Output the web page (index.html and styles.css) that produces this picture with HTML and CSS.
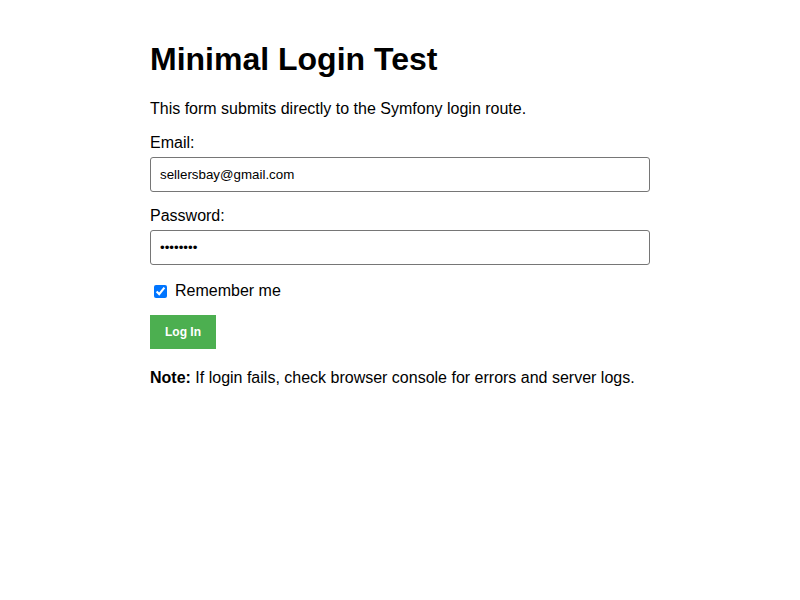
FILE: index.html
```html
<!DOCTYPE html>
<html>
<head>
<meta charset="utf-8">
<title>Minimal Login Test</title>
<link rel="stylesheet" href="styles.css">
</head>
<body>
<div class="container">
  <h1 class="title">Minimal Login Test</h1>
  <p class="intro">This form submits directly to the Symfony login route.</p>
  <form class="login-form">
    <div class="form-group">
      <label class="label" for="email">Email:</label>
      <input class="input" type="email" id="email" value="sellersbay@gmail.com">
    </div>
    <div class="form-group">
      <label class="label" for="password">Password:</label>
      <input class="input" type="password" id="password" value="password">
    </div>
    <div class="form-group check-row">
      <input class="checkbox" type="checkbox" id="remember" checked>
      <label class="check-label" for="remember">Remember me</label>
    </div>
    <button class="btn" type="button">Log In</button>
  </form>
  <p class="note"><strong>Note:</strong> If login fails, check browser console for errors and server logs.</p>
</div>
</body>
</html>
```
FILE: styles.css
```css
html, body {
  margin: 0;
  padding: 0;
  background: #fff;
}
body {
  font-family: "Liberation Sans", Arial, sans-serif;
  font-size: 16px;
  color: #000;
}
.container {
  max-width: 500px;
  margin: 0 auto;
  padding: 20px 0;
}
.title {
  font-size: 32px;
  font-weight: bold;
  margin: 21px 0 22px;
}
.intro {
  margin: 0 0 16px;
}
.form-group {
  margin-bottom: 15px;
}
.label {
  display: block;
  margin-bottom: 5px;
}
.input {
  display: block;
  box-sizing: border-box;
  width: 100%;
  padding: 9px 9px;
  font-family: "Liberation Sans", Arial, sans-serif;
  font-size: 13.33px;
  border: 1px solid #767676;
  border-radius: 3px;
  color: #000;
  background: #fff;
}
.check-row {
  display: flex;
  align-items: center;
  margin-top: 17px;
  margin-bottom: 15px;
}
.checkbox {
  margin: 0 8px 0 4px;
  width: 13px;
  height: 13px;
}
.btn {
  background: #4CAF50;
  color: #fff;
  border: none;
  padding: 10px 15px;
  font-family: "Liberation Sans", Arial, sans-serif;
  font-size: 12px;
  font-weight: bold;
  cursor: pointer;
}
.note {
  margin: 20px 0 16px;
}
```
